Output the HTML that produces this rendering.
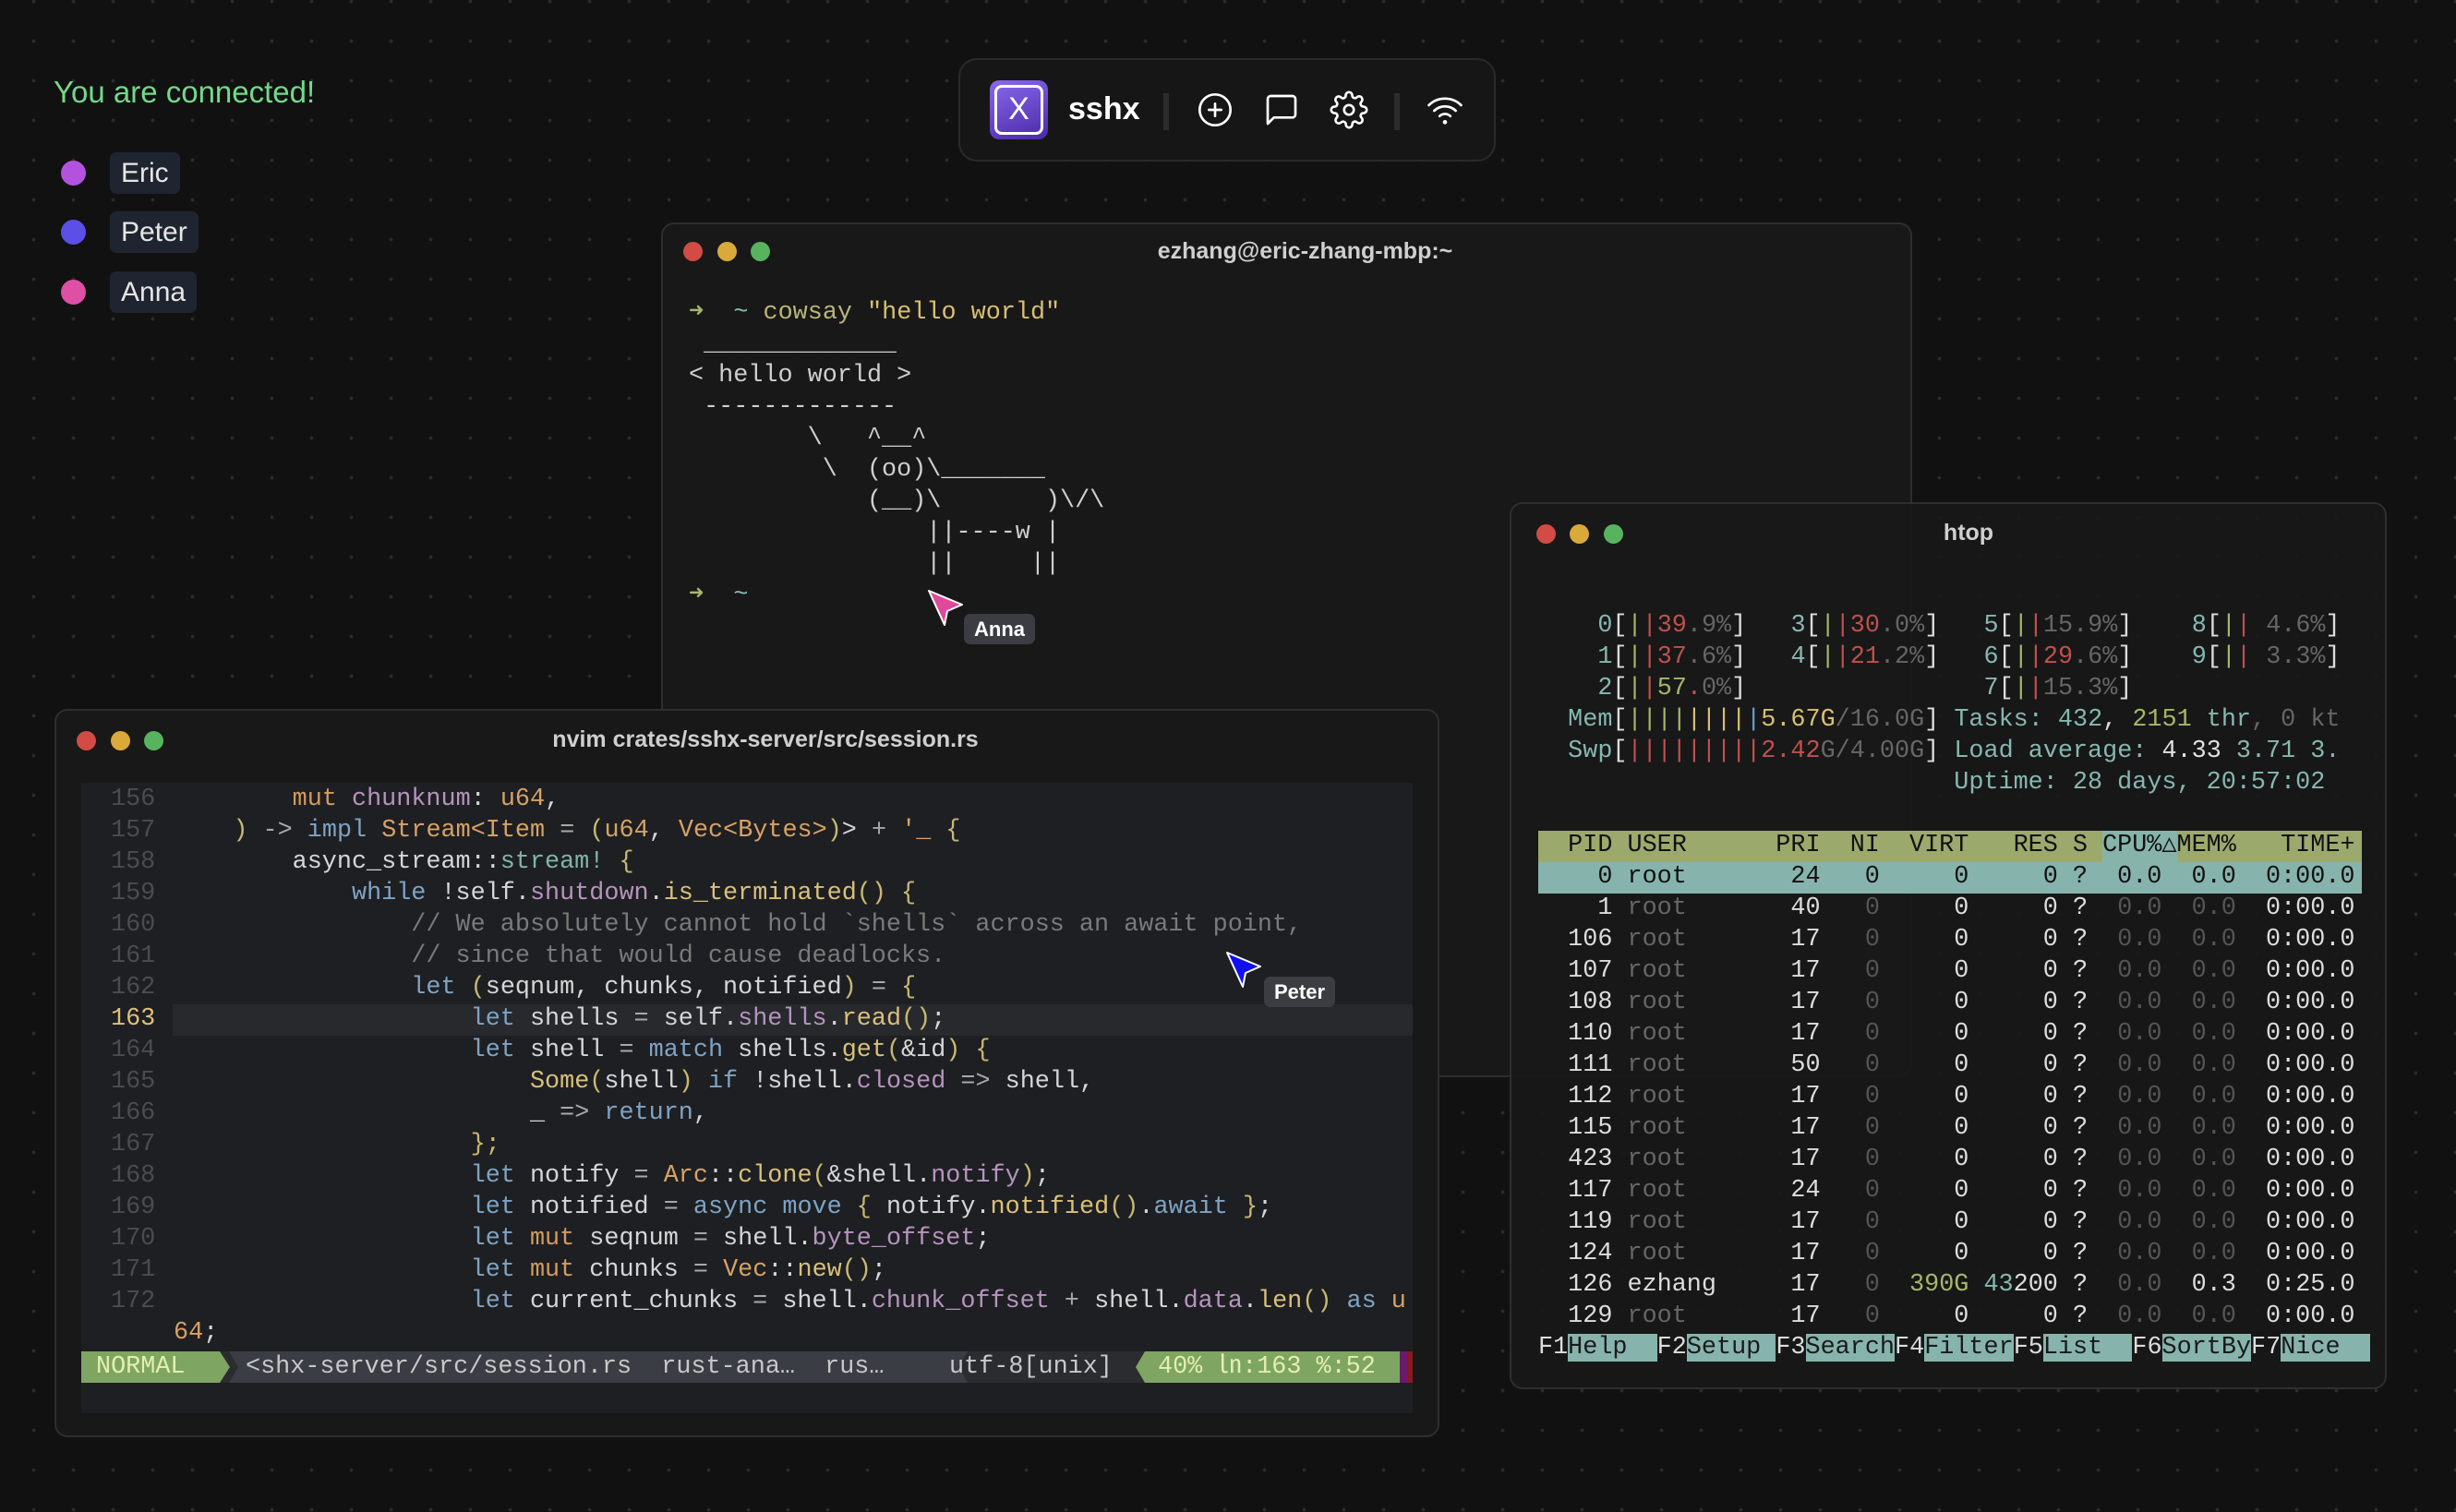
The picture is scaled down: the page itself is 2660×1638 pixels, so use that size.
<!DOCTYPE html>
<html><head><meta charset="utf-8"><style>
*{margin:0;padding:0;box-sizing:border-box}
html,body{width:2660px;height:1638px;overflow:hidden}
body{background-color:#111;background-image:radial-gradient(circle at 21.5px 21.5px,#2c2c2c 1.6px,transparent 2.2px);background-size:43px 43px;background-position:15px 23px;font-family:"Liberation Sans",sans-serif;position:relative}
.abs{position:absolute}
.mono{font-family:"Liberation Mono",monospace;font-size:26.8px;line-height:34px;white-space:pre}
.win{position:absolute;border:2px solid #2e2e2e;border-radius:14px;background:#181818}
.tl{position:absolute;width:21px;height:21px;border-radius:50%}
.title{position:absolute;left:0;right:0;text-align:center;color:#cfcfcf;font-weight:bold;font-size:25px}
.user{position:absolute;left:119px;height:45px;padding:0 12px;background:#1f2530;border-radius:7px;color:#e6e6e6;font-size:30px;font-weight:500;line-height:45px}
.dot{position:absolute;left:66px;width:27px;height:27px;border-radius:50%}
.lbl{position:absolute;background:#3c3c43;color:#fff;font-weight:bold;font-size:22px;border-radius:7px;text-align:center}
.k{color:#7fa3c4}.m{color:#d39b5e}.f{color:#b594bd}.y{color:#d9c17a}.t{color:#d7a265}.c{color:#7a7a7a}.w{color:#d6d6d6}.p{color:#c8b872}.o{color:#a8a8a8}.q{color:#7fb6a8}
.g{color:#666}.g2{color:#555}.cy{color:#86b8b0}.re{color:#c0504d}.gr{color:#a4b86a}.ye{color:#d8c070}.bl{color:#6a9fc9}.wh{color:#e0e0e0}
</style></head><body>

<div class="abs" style="left:58px;top:81px;color:#72d98a;font-size:33px">You are connected!</div>
<div class="dot" style="top:174px;background:#b452e0"></div><div class="user" style="top:165px">Eric</div>
<div class="dot" style="top:238px;background:#5b4fe8"></div><div class="user" style="top:229px">Peter</div>
<div class="dot" style="top:303px;background:#e04fa6"></div><div class="user" style="top:294px">Anna</div>

<!-- toolbar -->
<div class="abs" style="left:1038px;top:63px;width:582px;height:112px;background:#161616;border:2px solid #2a2a2a;border-radius:20px">
  <div class="abs" style="left:32px;top:22px;width:63px;height:64px;border-radius:10px;background:linear-gradient(160deg,#8a68ee,#4a2aa8)">
    <div class="abs" style="left:5px;top:5px;right:5px;bottom:5px;border:3px solid #fff;border-radius:8px;color:#fff;font-size:34px;text-align:center;line-height:46px">X</div>
  </div>
  <div class="abs" style="left:117px;top:34px;color:#fff;font-weight:bold;font-size:34px">sshx</div>
  <div class="abs" style="left:220px;top:36px;width:6px;height:40px;background:#2c2c2e"></div>
  <div class="abs" style="left:470px;top:36px;width:6px;height:40px;background:#2c2c2e"></div>
  <svg class="abs" style="left:256px;top:34px" width="40" height="40" viewBox="0 0 24 24" fill="none" stroke="#fff" stroke-width="1.6" stroke-linecap="round"><circle cx="12" cy="12" r="10"/><path d="M12 8v8M8 12h8"/></svg>
  <svg class="abs" style="left:328px;top:34px" width="40" height="40" viewBox="0 0 24 24" fill="none" stroke="#fff" stroke-width="1.6" stroke-linejoin="round"><path d="M21 15a2 2 0 0 1-2 2H7l-4 4V5a2 2 0 0 1 2-2h14a2 2 0 0 1 2 2z"/></svg>
  <svg class="abs" style="left:400px;top:33px" width="42" height="42" viewBox="0 0 24 24" fill="none" stroke="#fff" stroke-width="1.5" stroke-linejoin="round"><circle cx="12" cy="12" r="3"/><path d="M19.4 15a1.650 1.65 0 0 0 .33 1.82l.06.06a2 2 0 1 1-2.83 2.83l-.06-.06a1.650 1.65 0 0 0-1.82-.33 1.650 1.65 0 0 0-1 1.51V21a2 2 0 1 1-4 0v-.09A1.650 1.65 0 0 0 9 19.4a1.650 1.65 0 0 0-1.82.33l-.06.06a2 2 0 1 1-2.830-2.83l.06-.06A1.650 1.65 0 0 0 4.68 15a1.650 1.65 0 0 0-1.51-1H3a2 2 0 1 1 0-4h.09A1.650 1.65 0 0 0 4.6 9a1.650 1.65 0 0 0-.33-1.82l-.06-.06a2 2 0 1 1 2.830-2.83l.06.06A1.650 1.65 0 0 0 9 4.68a1.650 1.65 0 0 0 1-1.51V3a2 2 0 1 1 4 0v.09a1.650 1.65 0 0 0 1 1.51 1.650 1.65 0 0 0 1.82-.33l.06-.06a2 2 0 1 1 2.83 2.83l-.06.06A1.650 1.65 0 0 0 19.4 9a1.650 1.65 0 0 0 1.51 1H21a2 2 0 1 1 0 4h-.09a1.650 1.65 0 0 0-1.51 1z"/></svg>
  <svg class="abs" style="left:504px;top:34px" width="42" height="40" viewBox="0 0 24 24" fill="none" stroke="#fff" stroke-width="1.6" stroke-linecap="round"><path d="M1.5 9a15 15 0 0 1 21 0M5 12.6a10 10 0 0 1 14 0M8.5 16.1a5 5 0 0 1 7 0"/><circle cx="12" cy="20" r="0.6" fill="#fff"/></svg>
</div>

<!-- terminal 1 -->
<div class="win" style="left:716px;top:241px;width:1355px;height:926px">
  <div class="tl" style="left:22px;top:19px;background:#d24b45"></div>
  <div class="tl" style="left:59px;top:19px;background:#d9a93a"></div>
  <div class="tl" style="left:95px;top:19px;background:#58b35e"></div>
  <div class="title" style="top:15px;padding-left:40px">ezhang@eric-zhang-mbp:~</div>
  <div class="abs mono" style="left:28px;top:79px;color:#cfcfcf"><span class="gr">➜</span>  <span class="cy">~</span> <span style="color:#b8b67a">cowsay</span> <span class="ye">"hello world"</span>
 _____________
&lt; hello world &gt;
 -------------
        \   ^__^
         \  (oo)\_______
            (__)\       )\/\
                ||----w |
                ||     ||
<span class="gr">➜</span>  <span class="cy">~</span></div>
</div>

<!-- nvim -->
<div class="win" style="left:59px;top:768px;width:1500px;height:789px">
  <div class="tl" style="left:22px;top:22px;background:#d24b45"></div>
  <div class="tl" style="left:59px;top:22px;background:#d9a93a"></div>
  <div class="tl" style="left:95px;top:22px;background:#58b35e"></div>
  <div class="title" style="top:17px;padding-left:40px">nvim crates/sshx-server/src/session.rs</div>
  <div class="abs" style="left:27px;top:78px;width:1442px;height:683px;background:#1e1f22;overflow:hidden">
    <div class="abs" style="left:99px;top:240px;width:1400px;height:34px;background:#27292d"></div>
    <div class="abs mono" style="left:32px;top:1px;color:#4a4c50">156
157
158
159
160
161
162
<span style="color:#e0c07a">163</span>
164
165
166
167
168
169
170
171
172</div>
    <div class="abs mono w" style="left:100px;top:1px">        <span class="m">mut</span> <span class="f">chunknum</span>: <span class="t">u64</span>,
    <span class="p">)</span> <span class="o">-&gt;</span> <span class="k">impl</span> <span class="t">Stream&lt;Item</span> <span class="o">=</span> <span class="p">(</span><span class="t">u64</span>, <span class="t">Vec&lt;Bytes&gt;</span><span class="p">)</span>&gt; <span class="o">+</span> <span class="t">'_</span> <span class="p">{</span>
        async_stream::<span class="q">stream!</span> <span class="p">{</span>
            <span class="k">while</span> !self.<span class="f">shutdown</span>.<span class="y">is_terminated</span><span class="p">()</span> <span class="p">{</span>
                <span class="c">// We absolutely cannot hold `shells` across an await point,</span>
                <span class="c">// since that would cause deadlocks.</span>
                <span class="k">let</span> <span class="p">(</span>seqnum, chunks, notified<span class="p">)</span> <span class="o">=</span> <span class="p">{</span>
                    <span class="k">let</span> shells <span class="o">=</span> self.<span class="f">shells</span>.<span class="y">read</span><span class="p">()</span>;
                    <span class="k">let</span> shell <span class="o">=</span> <span class="k">match</span> shells.<span class="y">get</span><span class="p">(</span>&amp;id<span class="p">)</span> <span class="p">{</span>
                        <span class="y">Some</span><span class="p">(</span>shell<span class="p">)</span> <span class="k">if</span> !shell.<span class="f">closed</span> <span class="o">=&gt;</span> shell,
                        _ <span class="o">=&gt;</span> <span class="k">return</span>,
                    <span class="p">};</span>
                    <span class="k">let</span> notify <span class="o">=</span> <span class="t">Arc</span>::<span class="y">clone</span><span class="p">(</span>&amp;shell.<span class="f">notify</span><span class="p">)</span>;
                    <span class="k">let</span> notified <span class="o">=</span> <span class="k">async move</span> <span class="p">{</span> notify.<span class="y">notified</span><span class="p">()</span>.<span class="k">await</span> <span class="p">}</span>;
                    <span class="k">let</span> <span class="m">mut</span> seqnum <span class="o">=</span> shell.<span class="f">byte_offset</span>;
                    <span class="k">let</span> <span class="m">mut</span> chunks <span class="o">=</span> <span class="t">Vec</span>::<span class="y">new</span><span class="p">()</span>;
                    <span class="k">let</span> current_chunks <span class="o">=</span> shell.<span class="f">chunk_offset</span> <span class="o">+</span> shell.<span class="f">data</span>.<span class="y">len</span><span class="p">()</span> <span class="k">as</span> <span class="t">u</span>
<span class="t">64</span>;</div>
    <!-- statusline -->
    <div class="abs mono" style="left:0;top:616px;width:1442px;height:34px;background:#2a2c30"></div>
    <div class="abs mono" style="left:0;top:616px;width:161px;height:34px;background:#7fa563;color:#e3efb0;padding-left:16px;clip-path:polygon(0 0,150px 0,161px 17px,150px 34px,0 34px)">NORMAL</div>
    <div class="abs mono" style="left:160px;top:616px;width:800px;height:34px;background:#3a3d43;color:#c8c8c8;clip-path:polygon(0 0,800px 0,790px 17px,800px 34px,0 34px,10px 17px)"></div>
    <div class="abs mono" style="left:178px;top:616px;color:#c8c8c8">&lt;shx-server/src/session.rs  rust-ana…  rus…</div>
    <div class="abs mono" style="left:940px;top:616px;color:#c8c8c8">utf-8[unix]</div>
    <div class="abs mono" style="left:1142px;top:616px;width:288px;height:34px;background:#7fa563;color:#e3efb0;padding-left:24px;clip-path:polygon(10px 0,288px 0,288px 34px,10px 34px,0 17px)">40% ㏑:163 %:52</div>
    <div class="abs" style="left:1428px;top:616px;width:14px;height:34px;background:#6a1a6a"></div>
    <div class="abs" style="left:1436px;top:616px;width:6px;height:34px;background:#8a1a1a"></div>
  </div>
</div>

<!-- htop -->
<div class="win" style="left:1635px;top:544px;width:950px;height:961px;background:rgba(24,24,24,0.9)">
  <div class="tl" style="left:27px;top:22px;background:#d24b45"></div>
  <div class="tl" style="left:63px;top:22px;background:#d9a93a"></div>
  <div class="tl" style="left:100px;top:22px;background:#58b35e"></div>
  <div class="title" style="top:17px;padding-left:44px">htop</div>
  <div class="abs" style="left:29px;top:354px;width:892px;height:34px;background:#9ca96d"></div>
  <div class="abs" style="left:640px;top:354px;width:81px;height:34px;background:#86b4aa"></div>
  <div class="abs" style="left:29px;top:388px;width:892px;height:34px;background:#86b4ad"></div>
  <div class="abs mono" style="left:29px;top:115px;color:#ddd">    <span class="cy">0</span>[<span class="gr">|</span><span class="re">|39</span><span class="g">.9%</span>]   <span class="cy">3</span>[<span class="gr">|</span><span class="re">|30</span><span class="g">.0%</span>]   <span class="cy">5</span>[<span class="gr">|</span><span class="re">|</span><span class="g">15.9%</span>]    <span class="cy">8</span>[<span class="gr">|</span><span class="re">|</span><span class="g"> 4.6%</span>]
    <span class="cy">1</span>[<span class="gr">|</span><span class="re">|37</span><span class="g">.6%</span>]   <span class="cy">4</span>[<span class="gr">|</span><span class="re">|21</span><span class="g">.2%</span>]   <span class="cy">6</span>[<span class="gr">|</span><span class="re">|29</span><span class="g">.6%</span>]    <span class="cy">9</span>[<span class="gr">|</span><span class="re">|</span><span class="g"> 3.3%</span>]
    <span class="cy">2</span>[<span class="gr">|</span><span class="re">|</span><span class="gr">57</span><span class="re">.</span><span class="g">0%</span>]                <span class="cy">7</span>[<span class="gr">|</span><span class="re">|</span><span class="g">15.3%</span>]
  <span class="cy">Mem</span>[<span class="gr">||||</span><span class="ye">||||</span><span class="bl">|</span><span class="ye">5.67G</span><span class="g">/16.0G</span>] <span class="cy">Tasks: </span><span class="cy">432</span>, <span class="gr">2151</span> <span class="cy">thr</span><span class="g">, 0 kt</span>
  <span class="cy">Swp</span>[<span class="re">|||||||||2.42</span><span class="g">G/4.00G</span>] <span class="cy">Load average: </span><span class="wh">4.33 </span><span class="cy">3.71 3.</span>
                            <span class="cy">Uptime: 28 days, 20:57:02</span>

<span style="color:#111">  PID USER      PRI  NI  VIRT   RES S CPU%△MEM%   TIME+</span>
<span style="color:#111">    0 root       24   0     0     0 ?  0.0  0.0  0:00.0</span>
    1 <span class="g">root</span>       40   <span class="g2">0</span>     0     0 ?  <span class="g2">0.0  0.0</span>  0:00.0
  106 <span class="g">root</span>       17   <span class="g2">0</span>     0     0 ?  <span class="g2">0.0  0.0</span>  0:00.0
  107 <span class="g">root</span>       17   <span class="g2">0</span>     0     0 ?  <span class="g2">0.0  0.0</span>  0:00.0
  108 <span class="g">root</span>       17   <span class="g2">0</span>     0     0 ?  <span class="g2">0.0  0.0</span>  0:00.0
  110 <span class="g">root</span>       17   <span class="g2">0</span>     0     0 ?  <span class="g2">0.0  0.0</span>  0:00.0
  111 <span class="g">root</span>       50   <span class="g2">0</span>     0     0 ?  <span class="g2">0.0  0.0</span>  0:00.0
  112 <span class="g">root</span>       17   <span class="g2">0</span>     0     0 ?  <span class="g2">0.0  0.0</span>  0:00.0
  115 <span class="g">root</span>       17   <span class="g2">0</span>     0     0 ?  <span class="g2">0.0  0.0</span>  0:00.0
  423 <span class="g">root</span>       17   <span class="g2">0</span>     0     0 ?  <span class="g2">0.0  0.0</span>  0:00.0
  117 <span class="g">root</span>       24   <span class="g2">0</span>     0     0 ?  <span class="g2">0.0  0.0</span>  0:00.0
  119 <span class="g">root</span>       17   <span class="g2">0</span>     0     0 ?  <span class="g2">0.0  0.0</span>  0:00.0
  124 <span class="g">root</span>       17   <span class="g2">0</span>     0     0 ?  <span class="g2">0.0  0.0</span>  0:00.0
  126 ezhang     17   <span class="g2">0</span>  <span class="gr">390G</span> <span class="cy">43</span>200 ?  <span class="g2">0.0</span>  0.3  0:25.0
  129 <span class="g">root</span>       17   <span class="g2">0</span>     0     0 ?  <span class="g2">0.0  0.0</span>  0:00.0
F1<span style="background:#86b4ad;color:#1a1a1a">Help  </span>F2<span style="background:#86b4ad;color:#1a1a1a">Setup </span>F3<span style="background:#86b4ad;color:#1a1a1a">Search</span>F4<span style="background:#86b4ad;color:#1a1a1a">Filter</span>F5<span style="background:#86b4ad;color:#1a1a1a">List  </span>F6<span style="background:#86b4ad;color:#1a1a1a">SortBy</span>F7<span style="background:#86b4ad;color:#1a1a1a">Nice  </span></div>
</div>

<!-- cursors -->
<svg class="abs" style="left:1000px;top:634px" width="50" height="50" viewBox="0 0 50 50"><polygon points="6,6 42,21 26,28 23,43" fill="#e0489b" stroke="#fff" stroke-width="2" stroke-linejoin="round"/></svg>
<div class="lbl" style="left:1044px;top:665px;width:77px;height:33px;line-height:33px">Anna</div>
<svg class="abs" style="left:1323px;top:1026px" width="50" height="50" viewBox="0 0 50 50"><polygon points="6,6 42,21 26,28 23,43" fill="#1010f0" stroke="#fff" stroke-width="2" stroke-linejoin="round"/></svg>
<div class="lbl" style="left:1369px;top:1058px;width:77px;height:33px;line-height:33px">Peter</div>

</body></html>
